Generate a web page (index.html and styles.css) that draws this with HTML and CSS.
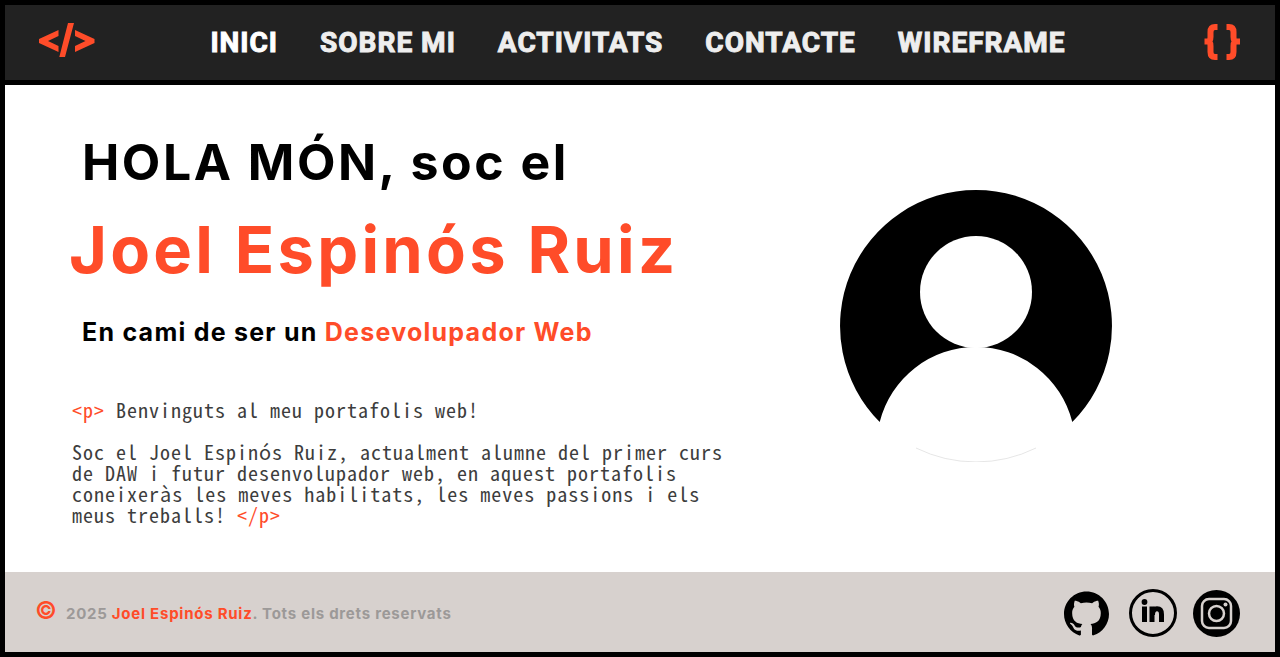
FILE: index.html
```html
<!DOCTYPE html>
<html lang="ca">
<head>
<meta charset="utf-8">
<meta name="viewport" content="width=device-width, initial-scale=1">
<title>Joel Espinós Ruiz</title>
<link rel="stylesheet" href="styles.css">
</head>
<body>
<div class="page">
  <header class="header">
    <svg class="logo-code" viewBox="0 0 56 34" aria-hidden="true">
      <path d="M19.500 7V13L9 18L19.500 23V29L0 20V16ZM29 0H35L26 34H20.300ZM36 7L55.500 16V20L36 29V23L46.500 18L36 13Z"/>
    </svg>
    <nav class="nav">
      <a class="nav-link active" href="#inici">INICI</a>
      <a class="nav-link" href="#sobre-mi">SOBRE MI</a>
      <a class="nav-link" href="#activitats">ACTIVITATS</a>
      <a class="nav-link" href="#contacte">CONTACTE</a>
      <a class="nav-link" href="#wireframe">WIREFRAME</a>
    </nav>
    <svg class="logo-braces" viewBox="0 0 37 36" aria-hidden="true">
      <path d="M13.500 3H11Q6.500 3 6.500 8V13Q6.500 17.500 3.500 17.500H0.500M13.500 33H11Q6.500 33 6.500 28V22Q6.500 17.500 3.500 17.500M22.500 3H25Q29.500 3 29.500 8V13Q29.500 17.500 32.500 17.500H36M22.500 33H25Q29.500 33 29.500 28V22Q29.500 17.500 32.500 17.500"/>
    </svg>
  </header>

  <main class="hero" id="inici">
    <div class="intro">
      <h1 class="title">
        <span class="greeting">HOLA MÓN, soc el</span>
        <span class="name">Joel Espinós Ruiz</span>
      </h1>
      <h2 class="role">En cami de ser un <span class="accent">Desevolupador Web</span></h2>
      <div class="about">
        <p><span class="accent">&lt;p&gt;</span> Benvinguts al meu portafolis web!</p>
        <p>Soc el Joel Espinós Ruiz, actualment alumne del primer curs de DAW i futur desenvolupador web, en aquest portafolis coneixeràs les meves habilitats, les meves passions i els meus treballs! <span class="accent">&lt;/p&gt;</span></p>
      </div>
    </div>
    <svg class="avatar" viewBox="0 0 272 272" role="img" aria-label="Avatar">
      <path d="M136 0A136 136 0 0 1 232.300 232A99.300 99.300 0 0 0 39.700 232A136 136 0 0 1 136 0Z"/>
      <circle cx="136" cy="102" r="56" fill="#fff"/>
      <path d="M76 258A136 136 0 0 0 196 258" fill="none" stroke="#ccc" stroke-width=".5"/>
    </svg>
  </main>

  <footer class="footer">
    <p class="rights"><span class="copy">©</span><span>2025 <span class="accent">Joel Espinós Ruiz</span>. Tots els drets reservats</span></p>
    <div class="social">
      <a class="github" href="#github" aria-label="GitHub">
        <svg class="icon-github" viewBox="0 0 24 24"><path d="M12 .297c-6.630 0-12 5.373-12 12 0 5.303 3.438 9.800 8.205 11.385.6.113.82-.258.82-.577 0-.285-.01-1.040-.015-2.040-3.338.724-4.042-1.610-4.042-1.610C4.422 18.070 3.633 17.700 3.633 17.700c-1.087-.744.084-.729.084-.729 1.205.084 1.838 1.236 1.838 1.236 1.070 1.835 2.809 1.305 3.495.998.108-.776.417-1.305.76-1.605-2.665-.3-5.466-1.332-5.466-5.930 0-1.310.465-2.380 1.235-3.220-.135-.303-.54-1.523.105-3.176 0 0 1.005-.322 3.300 1.230.96-.267 1.980-.399 3-.405 1.020.006 2.040.138 3 .405 2.280-1.552 3.285-1.230 3.285-1.230.645 1.653.24 2.873.12 3.176.765.840 1.230 1.910 1.230 3.220 0 4.610-2.805 5.625-5.475 5.920.42.360.81 1.096.81 2.220 0 1.606-.015 2.896-.015 3.286 0 .315.210.690.825.570C20.565 22.092 24 17.592 24 12.297c0-6.627-5.373-12-12-12"/></svg>
      </a>
      <a href="#linkedin" aria-label="LinkedIn">
        <svg class="icon-linkedin" viewBox="0 0 48 48">
          <circle cx="24" cy="24" r="22.500" fill="none" stroke="#000" stroke-width="3"/>
          <circle cx="15.500" cy="13" r="2.900"/>
          <rect x="13" y="17.500" width="5" height="15.500"/>
          <rect x="20.500" y="17.500" width="5" height="15.500"/>
          <path d="M23.500 26Q23.500 19.800 28 19.800Q32.500 19.800 32.500 25.500V33" fill="none" stroke="#000" stroke-width="5"/>
        </svg>
      </a>
      <a href="#instagram" aria-label="Instagram">
        <svg class="icon-instagram" viewBox="0 0 47 47">
          <circle cx="23.500" cy="23.500" r="23.500"/>
          <g fill="none" stroke="#d7d1ce" stroke-width="2.500">
            <rect x="9" y="9" width="29" height="29" rx="7"/>
            <circle cx="23.500" cy="23.500" r="7.500"/>
          </g>
          <circle cx="32.500" cy="14.500" r="2" fill="#d7d1ce"/>
        </svg>
      </a>
    </div>
  </footer>
</div>
</body>
</html>
```

FILE: styles.css
```css
* {
  box-sizing: border-box;
}

body {
  margin: 0;
  background: #fff;
  color: #000;
  font-family: Inter, "Liberation Sans", sans-serif;
}

h1, h2, p {
  margin: 0;
}

svg {
  display: block;
}

.page {
  min-height: 100vh;
  display: flex;
  flex-direction: column;
  border: 5px solid #000;
}

.accent {
  color: #ff4c29;
}

.header {
  display: grid;
  grid-template-columns: 1fr auto 1fr;
  align-items: center;
  height: 80px;
  padding: 0 34px;
  background: #222;
  border-bottom: 5px solid #000;
}

.logo-code {
  width: 56px;
  height: 34px;
  margin-bottom: 6px;
  fill: #ff4c29;
}

.logo-braces {
  justify-self: end;
  width: 37px;
  height: 36px;
  margin-bottom: 2px;
  fill: none;
  stroke: #ff4c29;
  stroke-width: 6;
}

.nav {
  display: flex;
  gap: 42px;
  margin-right: 4px;
}

.nav-link {
  color: #eee;
  font-family: Roboto, "Liberation Sans", sans-serif;
  font-size: 28px;
  line-height: 34px;
  font-weight: 700;
  letter-spacing: 1px;
  text-decoration: none;
  -webkit-text-stroke: 1px currentColor;
}

.nav-link.active {
  color: #fff;
}

.hero {
  flex: 1;
  display: flex;
  align-items: center;
  justify-content: space-between;
  gap: 32px;
  padding: 39px 163px 47px 64px;
}

.intro {
  max-width: 660px;
}

.title {
  font-weight: 700;
}

.greeting {
  display: block;
  margin-left: 13px;
  font-size: 50px;
  line-height: 76px;
  letter-spacing: 0.05em;
}

.name {
  display: block;
  color: #ff4c29;
  font-size: 65px;
  line-height: 100px;
  letter-spacing: 0.05em;
}

.role {
  margin: 16px 0 51px 13px;
  font-size: 25px;
  line-height: 32px;
  letter-spacing: 0.05em;
}

.about {
  display: grid;
  gap: 21px;
  margin-left: 3px;
  color: #3d3d3d;
  font-family: "Noto Sans Mono CJK SC", "Liberation Mono", monospace;
  font-size: 20px;
  font-weight: 500;
  line-height: 21px;
  letter-spacing: 0.05em;
}

.avatar {
  flex: none;
  width: 272px;
  height: 272px;
  margin-top: 2px;
}

.footer {
  display: flex;
  align-items: center;
  justify-content: space-between;
  height: 80px;
  padding: 2px 35px 0 30px;
  background: #d7d1ce;
}

.rights {
  display: flex;
  align-items: center;
  gap: 9px;
  color: #9c9998;
  font-size: 15px;
  font-weight: 700;
  letter-spacing: 0.05em;
}

.copy {
  padding-bottom: 5px;
  color: #ff4c29;
  font-size: 24px;
  font-weight: 600;
  line-height: 32px;
  letter-spacing: 0;
}

.social {
  display: flex;
  align-items: center;
  gap: 16px;
}

.github {
  margin-right: 4px;
}

.icon-github {
  width: 45px;
  height: 45px;
}

.icon-linkedin {
  width: 48px;
  height: 48px;
}

.icon-instagram {
  width: 47px;
  height: 47px;
}
```
